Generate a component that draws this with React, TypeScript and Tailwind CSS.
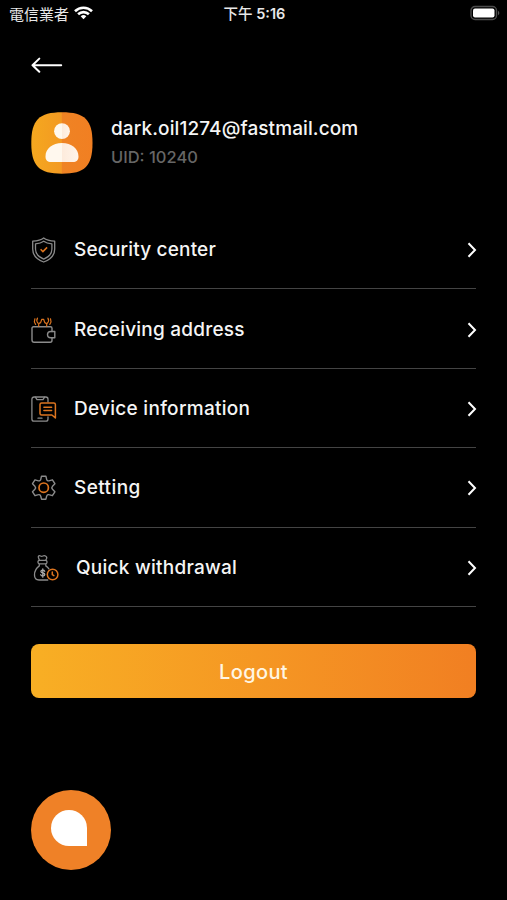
import type { ReactNode } from 'react';

const GREY = '#8b8b8b';
const ORANGE = '#dc741f';

function ShieldIcon() {
  return (
    <svg width="26" height="28" viewBox="0 0 26 28" fill="none" stroke={GREY} strokeWidth="1.3" strokeLinejoin="round">
      <path d="M12.7 2C10 4.2 6 5 1.7 5.2V13c0 6.2 4.4 10.6 11 13 6.6-2.4 11-6.8 11-13V5.2C19.4 5 15.4 4.2 12.7 2Z" />
      <path d="M12.7 5.2C10.4 6.9 7.5 7.6 4.5 7.9V13c0 4.7 3.1 8 8.2 10.1 5.1-2.1 8.2-5.4 8.2-10.1V7.900C17.9 7.6 15 6.9 12.7 5.2Z" />
      <path d="m9.600 13.300 2.300 2.300 4.200-4.200" stroke={ORANGE} strokeWidth="1.5" />
    </svg>
  );
}

function WalletIcon() {
  return (
    <svg width="26" height="28" viewBox="0 0 26 28" fill="none" stroke={GREY} strokeWidth="1.4" strokeLinejoin="round" strokeLinecap="round">
      <path d="M21 15.500V12.300c0-.9-.6-1.500-1.500-1.500H2.500C1.600 10.800 1 11.400 1 12.300V24c0 1.400.8 2.200 2.200 2.200h16c1.200 0 1.800-.7 1.800-1.900v-2.500" />
      <path d="M23.800 15.500H19.700c-1.900 0-3.200 1.300-3.200 3.100s1.300 3.200 3.200 3.200h4.100Z" />
      <g stroke={ORANGE} strokeWidth="1.2">
        <path d="M7.700 10.300V7.600l1.900-1 1.200-3.300h1.800l1.200 3.300 1.900 1v2.700" />
        <path d="M6.500 2.200C5.500 3.700 5.700 5.700 7 7.200M16.900 2.200c1 1.500.8 3.500-.5 5" />
        <path d="M3.900 2.800c-.8 1.800-.6 3.800.7 5.600M19.500 2.800c.8 1.800.6 3.800-.7 5.600" />
      </g>
    </svg>
  );
}

function DeviceIcon() {
  return (
    <svg width="27" height="28" viewBox="0 0 27 28" fill="none" stroke={GREY} strokeWidth="1.3" strokeLinejoin="round" strokeLinecap="round">
      <path d="M17 7V4.200c0-1.400-.9-2.200-2.200-2.200H3.100C1.800 2 .9 2.800.9 4.200v19.700c0 1.300.9 2.200 2.200 2.200h11.700c1.300 0 2.200-.9 2.200-2.200v-2.100" />
      <path d="M4.400 2.200 6 4.600h6l1.600-2.400M7 23.200h4" />
      <g stroke={ORANGE} strokeWidth="1.5">
        <path d="M10.600 7.900h12.200c1.100 0 1.600.5 1.600 1.500v13.500L20.900 20H10.600C9.500 20 9 19.500 9 18.500v-9c0-1 .5-1.600 1.600-1.600Z" />
        <path d="M12.900 12.200h7.700M12.900 15.400h7.700" />
      </g>
    </svg>
  );
}

function GearIcon() {
  return (
    <svg width="26" height="28" viewBox="0 0 26 28" fill="none" stroke={GREY} strokeWidth="1.4" strokeLinejoin="round">
      <path d="M10.500 2.200h4.400l.8 3.400c.2.900 1.300 1.500 2.200 1.200l3.500-1 2.500 3.900-2.400 2.500c-.8.9-.8 2.200 0 3.100l2.400 2.500-2.500 3.900-3.500-1c-.9-.3-2 .4-2.200 1.300l-.8 3.200h-4.400L9.700 22c-.2-.9-1.300-1.600-2.200-1.300l-3.500 1-2.500-3.900 2.400-2.500c.8-.9.8-2.200 0-3.100L1.500 9.700 4 5.800l3.500 1c.9.300 2-.3 2.200-1.200Z" />
      <circle cx="12.700" cy="13.700" r="4.700" stroke={ORANGE} strokeWidth="1.700" />
    </svg>
  );
}

function MoneyBagIcon() {
  return (
    <svg width="29" height="28" viewBox="0 0 29 28" fill="none" stroke={GREY} strokeWidth="1.3" strokeLinejoin="round" strokeLinecap="round">
      <path d="M8.300 6 7.400 3.500C6.900 1.800 8.300 1.400 9.500 2c.9.500 1.500.5 2.400 0 .9-.5 1.700-.5 2.600 0 1 .6 1.600 1.500 1 2.700L14.800 6" />
      <rect x="7" y="6.300" width="9" height="3.500" rx="1.500" />
      <path d="M8.300 10.300v1.600C5.600 13.800 3.500 17.200 3.500 21c0 3.200 1.600 5 4.500 5h8.800M14.800 10.300v1.600c1.200.8 2.300 1.800 3.100 3" />
      <path d="M13.700 17.300c-.4-.8-1-1.100-1.900-1.100-1.100 0-1.900.5-1.900 1.400 0 1.900 3.900.9 3.900 2.900 0 .9-.8 1.500-2 1.500-1 0-1.700-.4-2.100-1.200M11.800 14.900v8.300" stroke="#aaa" />
      <circle cx="21.600" cy="20.500" r="5.300" stroke={ORANGE} strokeWidth="1.500" />
      <path d="M21.300 18v2.700l1.600 1" stroke={ORANGE} strokeWidth="1.500" />
    </svg>
  );
}

interface MenuItem {
  label: string;
  icon: ReactNode;
  iconWidth: string;
  tracking: string;
}

const items: MenuItem[] = [
  { label: 'Security center', icon: <ShieldIcon />, iconWidth: 'w-[43px]', tracking: 'tracking-[0.17px]' },
  { label: 'Receiving address', icon: <WalletIcon />, iconWidth: 'w-[43px]', tracking: 'tracking-[0.22px]' },
  { label: 'Device information', icon: <DeviceIcon />, iconWidth: 'w-[43px]', tracking: 'tracking-[0.28px]' },
  { label: 'Setting', icon: <GearIcon />, iconWidth: 'w-[43px]', tracking: 'tracking-[0.4px]' },
  { label: 'Quick withdrawal', icon: <MoneyBagIcon />, iconWidth: 'w-[45px]', tracking: 'tracking-[0.25px]' },
];

function StatusBar() {
  return (
    <div className="grid h-7 grid-cols-3 items-center pl-[9px] pr-[7px] text-[#e8e8e8]">
      <div className="flex items-center gap-[5px]">
        <span className="whitespace-nowrap font-['Noto_Sans_CJK_TC',sans-serif] text-[15px] leading-7">電信業者</span>
        <svg className="-mt-[2px]" width="19" height="14" viewBox="0 0 19 14" fill="none" stroke="#fff" strokeWidth="2.6">
          <path d="M1 5.200a12.200 12.200 0 0 1 17 0M4.100 8.300a7.700 7.700 0 0 1 10.800 0" />
          <path d="m9.500 13.300 2.800-3a4 4 0 0 0-5.600 0Z" fill="#fff" stroke="none" />
        </svg>
      </div>
      <div className="whitespace-nowrap text-center font-[Inter,'Noto_Sans_CJK_TC',sans-serif] text-[14.5px] font-semibold leading-7">
        <span className="font-medium">下午</span> 5:16
      </div>
      <svg className="-mt-[2px] justify-self-end" width="30" height="16" viewBox="0 0 30 16" fill="none">
        <rect x="1" y="1.500" width="25.500" height="13" rx="4" stroke="#4c4c4c" strokeWidth="1.400" />
        <rect x="3" y="3.500" width="21.500" height="9" rx="2" fill="#fff" />
        <path d="M28 5.800c1.800 1 1.800 3.400 0 4.400Z" fill="#555" />
      </svg>
    </div>
  );
}

function Avatar() {
  return (
    <svg width="62" height="62" viewBox="0 0 62 62" className="shrink-0">
      <defs>
        <linearGradient id="avatar" x1="0" x2="1" y1="0" y2="0">
          <stop offset="0" stopColor="#f5a81f" />
          <stop offset="0.49" stopColor="#f39a22" />
          <stop offset="0.51" stopColor="#ef8324" />
          <stop offset="1" stopColor="#f17f22" />
        </linearGradient>
        <linearGradient id="person" x1="0" x2="1" y1="0" y2="0">
          <stop offset="0.49" stopColor="#fff8ee" />
          <stop offset="0.51" stopColor="#fdebdc" />
          <stop offset="1" stopColor="#fff4ea" />
        </linearGradient>
      </defs>
      <path d="M31 .3C54 .3 61.500 8 61.500 31S54 61.700 31 61.700.300 54 .300 31 8 .3 31 .3Z" fill="url(#avatar)" />
      <circle cx="31" cy="19.200" r="7.900" fill="url(#person)" />
      <path d="M31 31c9.500 0 16.500 5.500 16.500 13.500 0 3.700-2 5.500-5.700 5.500H20.200c-3.700 0-5.700-1.800-5.700-5.500C14.500 36.500 21.500 31 31 31Z" fill="url(#person)" />
    </svg>
  );
}

function MenuRow({ item }: { item: MenuItem }) {
  return (
    <button className="flex h-[79.4px] w-full items-center border-b border-[#444] pt-[2px] text-left">
      <span className={`shrink-0 ${item.iconWidth}`}>{item.icon}</span>
      <span className={`grow whitespace-nowrap text-[19px] font-medium leading-7 ${item.tracking}`}>{item.label}</span>
      <svg className="-mr-px" width="10" height="18" viewBox="0 0 10 18" fill="none" stroke="#fff" strokeWidth="2">
        <path d="m1.500 2.300 6.500 6.700-6.500 6.700" />
      </svg>
    </button>
  );
}

export default function App() {
  return (
    <div className="flex h-[900px] w-[507px] flex-col overflow-hidden bg-black font-[Inter,sans-serif] text-[#f5f5f5]">
      <StatusBar />

      {/* Back */}
      <header className="flex h-[74px] items-center px-[31px]">
        <button aria-label="Back">
          <svg width="32" height="16" viewBox="0 0 32 16" fill="none" stroke="#fff" strokeWidth="2" strokeLinecap="round" strokeLinejoin="round">
            <path d="M8.300 1.600 1.500 8.200l6.800 6.600M1.500 8.200H30.200" />
          </svg>
        </button>
      </header>

      {/* Profile */}
      <section className="mt-[10px] flex h-[62px] px-[31px]">
        <Avatar />
        <div className="ml-[18px] pt-1">
          <p className="whitespace-nowrap text-[19px] font-medium leading-[26px] tracking-[0.1px]">dark.oil1274@fastmail.com</p>
          <p className="mt-[3px] whitespace-nowrap text-[16.5px] font-medium leading-6 text-[#666]">UID: 10240</p>
        </div>
      </section>

      {/* Menu */}
      <nav className="mt-[36px] flex flex-col pl-[31px] pr-[31px]">
        {items.map((item) => (
          <MenuRow key={item.label} item={item} />
        ))}
      </nav>

      <div className="mt-[37.5px] px-[31px]">
        <button className="h-[54px] w-full rounded-lg bg-linear-to-r from-[#f8af24] to-[#f17f22] pt-px text-[20px] font-medium tracking-[0.4px] text-[#fff6e4]">
          Logout
        </button>
      </div>

      {/* Support chat */}
      <div className="mt-[91.5px] px-[31px]">
        <button aria-label="Chat" className="flex size-20 items-center justify-center rounded-full bg-[#ef8127]">
          <span className="mr-[4px] mt-[-4px] size-9 rounded-full rounded-br-[1px] bg-white" />
        </button>
      </div>
    </div>
  );
}
